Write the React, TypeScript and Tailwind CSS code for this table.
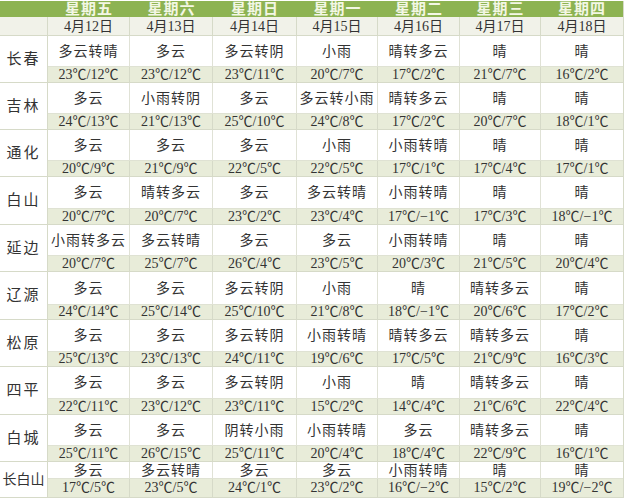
import React from "react";

const days = [
  ["星期五", "4月12日"],
  ["星期六", "4月13日"],
  ["星期日", "4月14日"],
  ["星期一", "4月15日"],
  ["星期二", "4月16日"],
  ["星期三", "4月17日"],
  ["星期四", "4月18日"],
];

const widths = [82, 83, 84, 81, 82, 81, 82];

type Block = { city: string; w: string[]; t: string[]; h: number; wh: number; th: number };

const blocks: Block[] = [
  { city: "长春", h: 47, wh: 31, th: 16, w: ["多云转晴", "多云", "多云转阴", "小雨", "晴转多云", "晴", "晴"], t: ["23℃/12℃", "23℃/12℃", "23℃/11℃", "20℃/7℃", "17℃/2℃", "21℃/7℃", "16℃/2℃"] },
  { city: "吉林", h: 47, wh: 31, th: 16, w: ["多云", "小雨转阴", "多云", "多云转小雨", "晴转多云", "晴", "晴"], t: ["24℃/13℃", "21℃/13℃", "25℃/10℃", "24℃/8℃", "17℃/2℃", "20℃/7℃", "18℃/1℃"] },
  { city: "通化", h: 47, wh: 31, th: 16, w: ["多云", "多云", "多云", "小雨", "小雨转晴", "晴", "晴"], t: ["20℃/9℃", "21℃/9℃", "22℃/5℃", "22℃/5℃", "17℃/1℃", "17℃/4℃", "17℃/1℃"] },
  { city: "白山", h: 48, wh: 32, th: 16, w: ["多云", "晴转多云", "多云", "多云转晴", "小雨转晴", "晴", "晴"], t: ["20℃/7℃", "20℃/7℃", "23℃/2℃", "23℃/4℃", "17℃/−1℃", "17℃/3℃", "18℃/−1℃"] },
  { city: "延边", h: 47, wh: 31, th: 16, w: ["小雨转多云", "多云转晴", "多云", "多云", "小雨转晴", "晴", "晴"], t: ["20℃/7℃", "25℃/7℃", "26℃/4℃", "23℃/5℃", "20℃/3℃", "21℃/5℃", "20℃/4℃"] },
  { city: "辽源", h: 48, wh: 33, th: 15, w: ["多云", "多云", "多云转阴", "小雨", "晴", "晴转多云", "晴"], t: ["24℃/14℃", "25℃/14℃", "25℃/10℃", "21℃/8℃", "18℃/−1℃", "20℃/6℃", "17℃/2℃"] },
  { city: "松原", h: 47, wh: 32, th: 15, w: ["多云", "多云", "多云转阴", "小雨转晴", "晴转多云", "晴转多云", "晴"], t: ["25℃/13℃", "23℃/13℃", "24℃/11℃", "19℃/6℃", "17℃/5℃", "21℃/9℃", "16℃/3℃"] },
  { city: "四平", h: 48, wh: 32, th: 16, w: ["多云", "多云", "多云转阴", "小雨", "晴", "晴转多云", "晴"], t: ["22℃/11℃", "23℃/12℃", "23℃/11℃", "15℃/2℃", "14℃/4℃", "21℃/6℃", "22℃/4℃"] },
  { city: "白城", h: 47, wh: 31, th: 16, w: ["多云", "多云", "阴转小雨", "小雨转晴", "多云", "晴转多云", "晴"], t: ["25℃/11℃", "26℃/15℃", "25℃/11℃", "20℃/4℃", "18℃/4℃", "22℃/9℃", "16℃/1℃"] },
  { city: "长白山", h: 36, wh: 17, th: 19, w: ["多云", "多云转晴", "多云", "多云", "小雨转晴", "晴", "晴"], t: ["17℃/5℃", "23℃/5℃", "24℃/1℃", "23℃/2℃", "16℃/−2℃", "15℃/2℃", "19℃/−2℃"] },
];

const font = { fontFamily: '"Liberation Serif", "Noto Sans CJK SC", serif' };

export default function App() {
  return (
    <div className="w-[626px] h-[500px] bg-white text-[14px] text-[#333333] overflow-hidden" style={font}>
      <div className="w-[624px] border-r border-[#d6dac8]">
        <div className="flex h-[16px] mt-[1px] bg-[#8db352]">
          <div className="w-[48px] shrink-0" />
          {days.map((d, i) => (
            <div
              key={i}
              className="flex items-center justify-center font-bold text-[#f3f7e4] text-[15px] leading-[16px] tracking-[1px]"
              style={{ width: widths[i] }}
            >
              {d[0]}
            </div>
          ))}
        </div>
        <div className="flex h-[19px] bg-[#f1f2e9] border-b border-[#d6dac8]">
          <div className="w-[48px] shrink-0 border-r border-[#d6dac8]" />
          {days.map((d, i) => (
            <div
              key={i}
              className="flex items-center justify-center leading-[19px] border-r border-[#d6dac8] last:border-r-0"
              style={{ width: widths[i] }}
            >
              {d[1]}
            </div>
          ))}
        </div>
        {blocks.map((b, bi) => (
          <div key={bi} className="flex border-b border-[#d6dac8]" style={{ height: b.h }}>
            <div
              className={
                b.city.length > 2
                  ? "w-[48px] shrink-0 flex items-center justify-center border-r border-[#d6dac8] whitespace-nowrap text-[14px]"
                  : "w-[48px] shrink-0 flex items-center justify-center border-r border-[#d6dac8] whitespace-nowrap tracking-[2px] text-[15px]"
              }
            >
              {b.city}
            </div>
            <div className="flex flex-col flex-1">
              <div className="flex bg-white border-b border-[#dfe2d3]" style={{ height: b.wh }}>
                {b.w.map((x, i) => (
                  <div
                    key={i}
                    className="flex items-center justify-center whitespace-nowrap tracking-[1px] border-r border-[#e0e2d6] last:border-r-0"
                    style={{ width: widths[i] }}
                  >
                    {x}
                  </div>
                ))}
              </div>
              <div className="flex bg-[#e8ecd9] flex-1">
                {b.t.map((x, i) => (
                  <div
                    key={i}
                    className="flex items-center justify-center whitespace-nowrap leading-none border-r border-[#d6dac8] last:border-r-0"
                    style={{ width: widths[i] }}
                  >
                    {x}
                  </div>
                ))}
              </div>
            </div>
          </div>
        ))}
      </div>
    </div>
  );
}
